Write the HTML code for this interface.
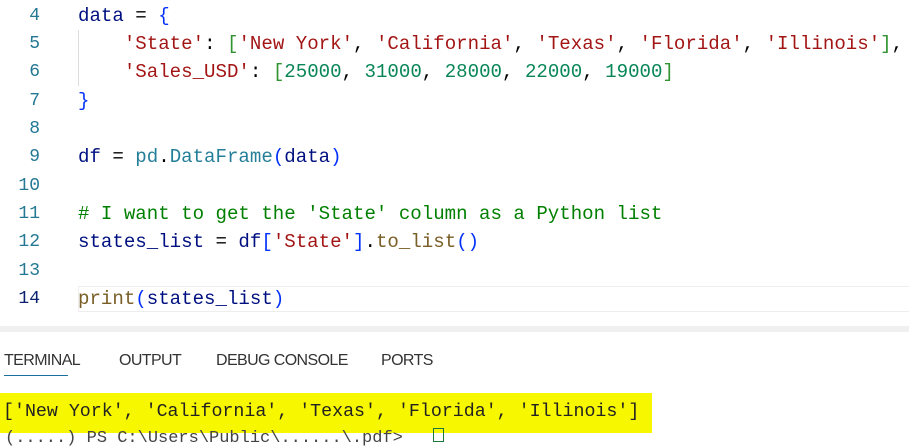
<!DOCTYPE html>
<html><head><style>
body{margin:0;width:909px;height:436px;background:#fff;overflow:hidden;position:relative;font-family:"Liberation Mono",monospace;}
.ln{position:absolute;left:0;width:40px;text-align:right;color:#237893;font-size:18px;}
.code{position:absolute;left:78px;font-size:19.1px;white-space:pre;color:#001080;}
.l{position:absolute;height:28px;line-height:28px;}
.v{color:#001080}.b{color:#0431fa}.s{color:#a31515}.g{color:#319331}.n{color:#098658}.f{color:#795e26}.c{color:#008000}.t{color:#267f99}.p{color:#000}
</style></head><body>
<div style="position:absolute;left:78px;top:286px;width:831px;height:26px;border:1px solid #eee;border-right:none;box-sizing:border-box"></div>
<div style="position:absolute;left:78px;top:30px;width:1px;height:56px;background:#ddd"></div>
<div style="position:absolute;left:0;top:326px;width:909px;height:6px;background:#f0f0f0"></div>
<div class="ln l" style="top:2px">4</div>
<div class="ln l" style="top:30px">5</div>
<div class="ln l" style="top:58px">6</div>
<div class="ln l" style="top:87px">7</div>
<div class="ln l" style="top:115px">8</div>
<div class="ln l" style="top:143px">9</div>
<div class="ln l" style="top:172px">10</div>
<div class="ln l" style="top:200px">11</div>
<div class="ln l" style="top:228px">12</div>
<div class="ln l" style="top:257px">13</div>
<div class="ln l" style="top:285px;color:#0b216f">14</div>
<div class="code l" style="top:2px"><span class="v">data</span><span class="p"> = </span><span class="b">{</span></div>
<div class="code l" style="top:30px">    <span class="s">'State'</span><span class="p">: </span><span class="g">[</span><span class="s">'New York'</span><span class="p">, </span><span class="s">'California'</span><span class="p">, </span><span class="s">'Texas'</span><span class="p">, </span><span class="s">'Florida'</span><span class="p">, </span><span class="s">'Illinois'</span><span class="g">]</span><span class="p">,</span></div>
<div class="code l" style="top:58px">    <span class="s">'Sales_USD'</span><span class="p">: </span><span class="g">[</span><span class="n">25000</span><span class="p">, </span><span class="n">31000</span><span class="p">, </span><span class="n">28000</span><span class="p">, </span><span class="n">22000</span><span class="p">, </span><span class="n">19000</span><span class="g">]</span></div>
<div class="code l" style="top:87px"><span class="b">}</span></div>
<div class="code l" style="top:143px"><span class="v">df</span><span class="p"> = </span><span class="t">pd</span><span class="p">.</span><span class="t">DataFrame</span><span class="b">(</span><span class="v">data</span><span class="b">)</span></div>
<div class="code l" style="top:200px"><span class="c"># I want to get the 'State' column as a Python list</span></div>
<div class="code l" style="top:228px"><span class="v">states_list</span><span class="p"> = </span><span class="v">df</span><span class="b">[</span><span class="s">'State'</span><span class="b">]</span><span class="p">.</span><span class="f">to_list</span><span class="b">()</span></div>
<div class="code l" style="top:285px"><span class="f">print</span><span class="b">(</span><span class="v">states_list</span><span class="b">)</span></div>
<div style="position:absolute;top:352px;left:4px;width:900px;font-family:'Liberation Sans',sans-serif;font-size:16px;color:#333;letter-spacing:-0.6px;white-space:nowrap">
<span style="position:absolute;left:0">TERMINAL</span><span style="position:absolute;left:115px">OUTPUT</span><span style="position:absolute;left:212px">DEBUG CONSOLE</span><span style="position:absolute;left:377px">PORTS</span></div>
<div style="position:absolute;left:4px;top:375px;width:64px;height:1px;background:#1a6f9e"></div>
<div style="position:absolute;left:0;top:393px;width:652px;height:40px;background:#f7f700"></div>
<div style="position:absolute;left:3px;top:402px;font-size:18.3px;color:#222;white-space:pre">['New York', 'California', 'Texas', 'Florida', 'Illinois']</div>
<div style="position:absolute;left:5px;top:429px;font-size:17px;color:#444;white-space:pre">(.....) PS C:\Users\Public\......\.pdf&gt; </div>
<div style="position:absolute;left:433px;top:428px;width:9px;height:12px;border:1px solid #1a7a3a"></div>
</body></html>
